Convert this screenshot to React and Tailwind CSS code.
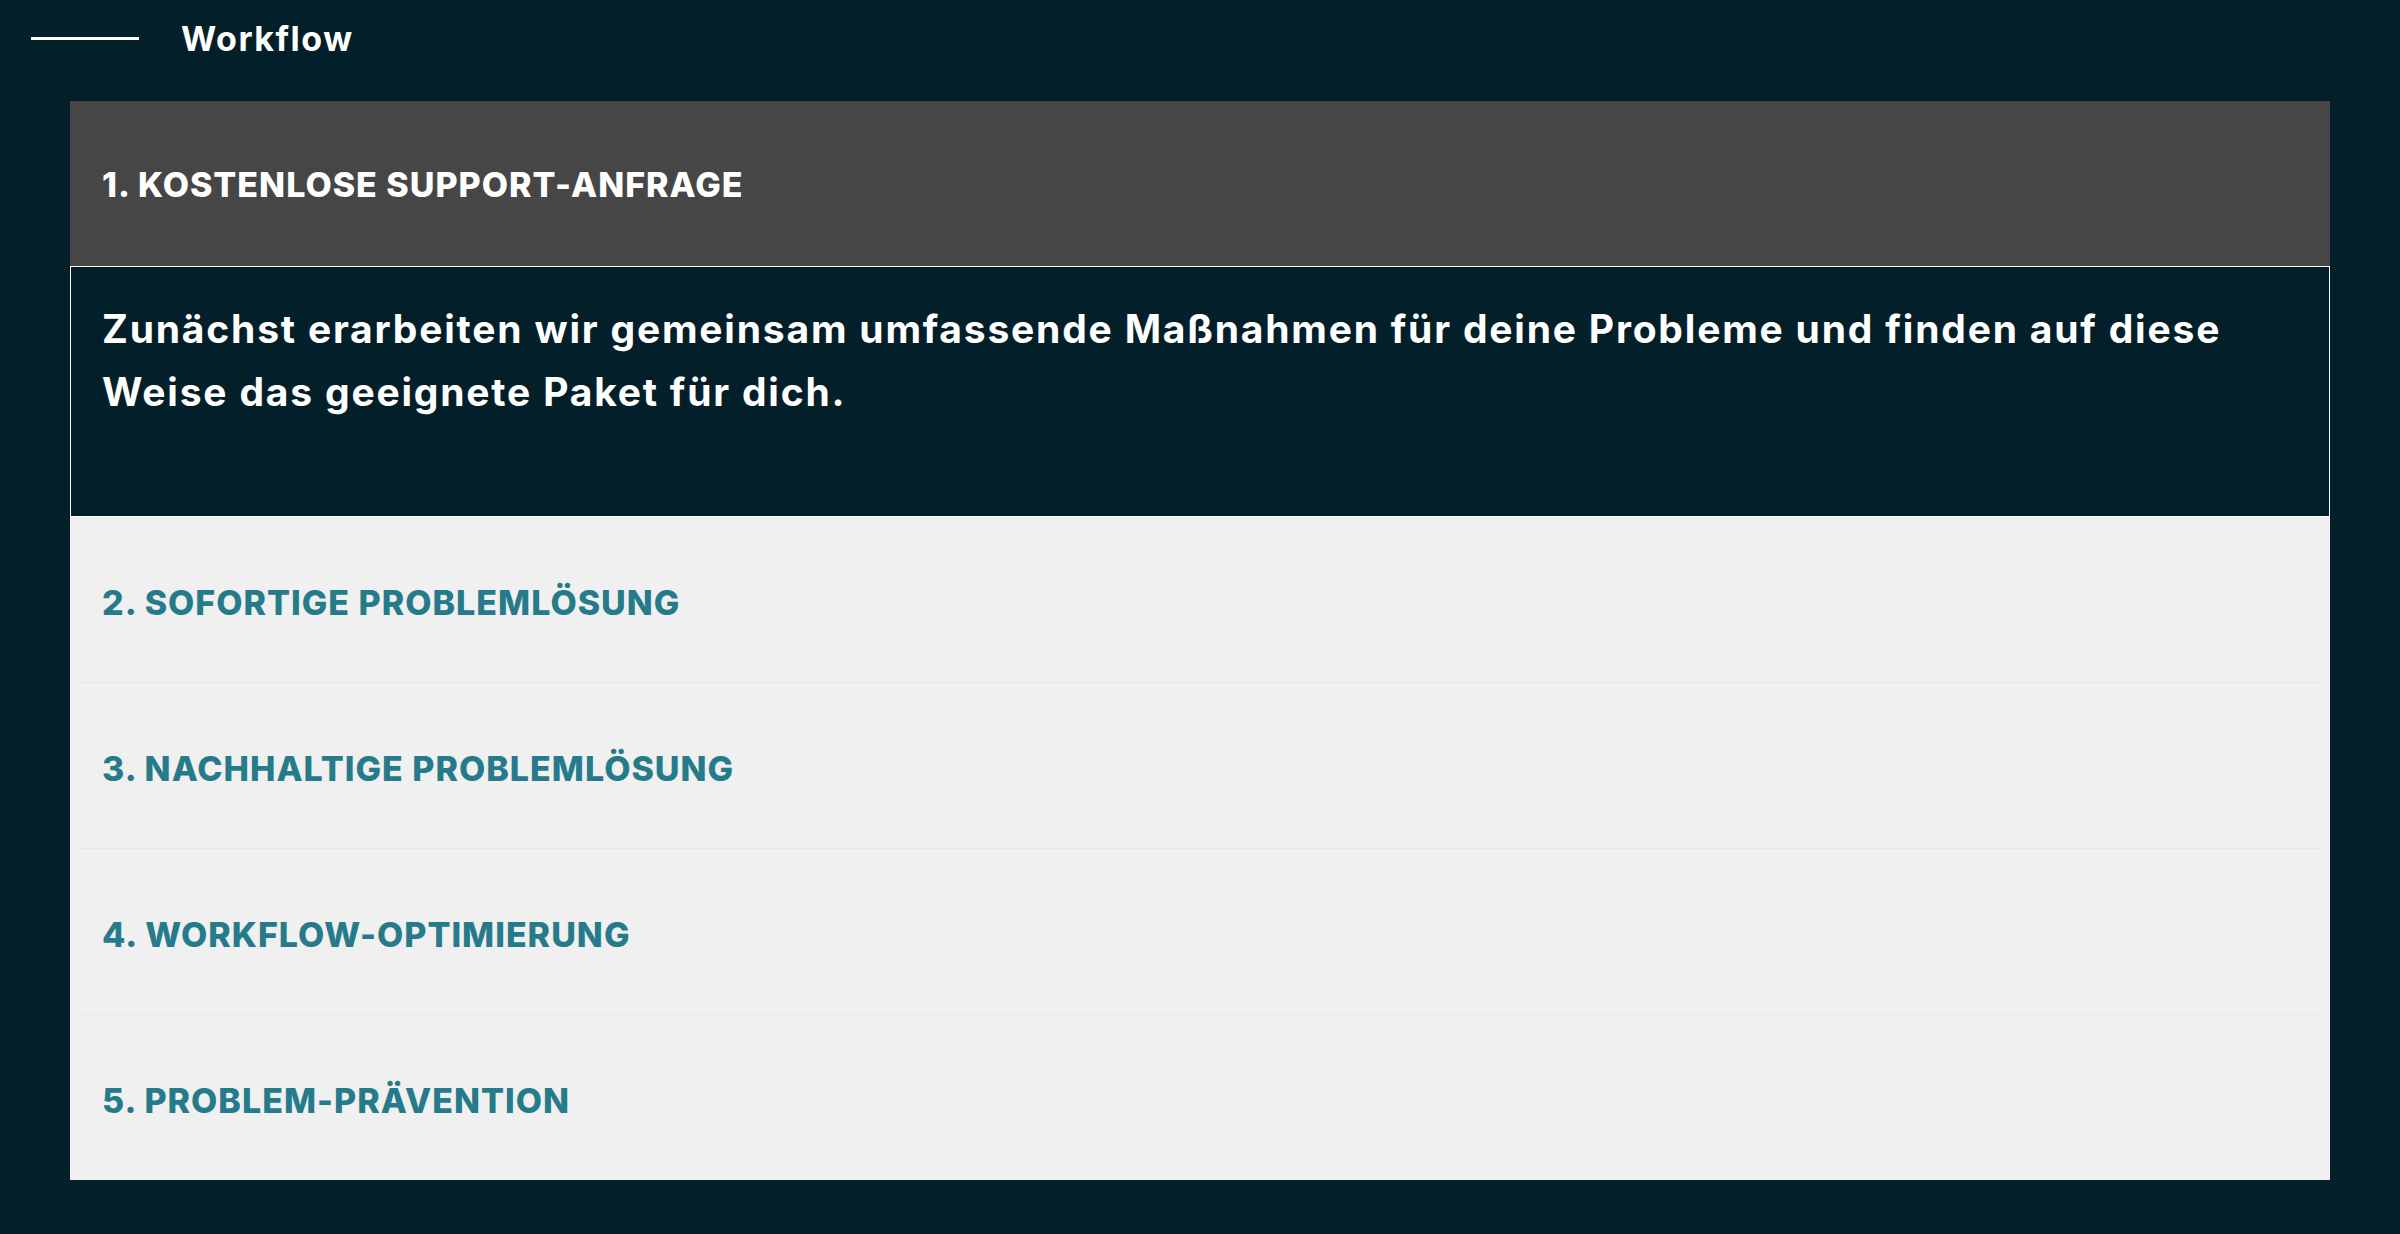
import React, { useState } from "react";

const steps = [
  {
    title: "1. KOSTENLOSE SUPPORT-ANFRAGE",
    text: "Zunächst erarbeiten wir gemeinsam umfassende Maßnahmen für deine Probleme und finden auf diese Weise das geeignete Paket für dich.",
  },
  { title: "2. SOFORTIGE PROBLEMLÖSUNG", text: "" },
  { title: "3. NACHHALTIGE PROBLEMLÖSUNG", text: "" },
  { title: "4. WORKFLOW-OPTIMIERUNG", text: "" },
  { title: "5. PROBLEM-PRÄVENTION", text: "" },
];

const App = () => {
  const [open, setOpen] = useState(0);

  return (
    <div
      className="min-h-screen bg-[#03202a] pb-[52px]"
      style={{ fontFamily: "Inter, 'Noto Sans', sans-serif" }}
    >
      <div className="flex items-center h-[76px] pl-[31px]">
        <span className="block w-[108px] h-[3px] bg-white"></span>
        <h2 className="ml-[42px] text-[34px] font-bold text-white tracking-[1.5px]">Workflow</h2>
      </div>

      <div className="mx-[70px] mt-[25px] bg-[#f0f0f0]">
        {steps.map((step, index) => {
          const isOpen = open === index;
          const last = index === steps.length - 1;
          return (
            <div key={index}>
              <button
                onClick={() => setOpen(isOpen ? -1 : index)}
                className={
                  isOpen
                    ? "w-full flex items-center h-[165px] pl-[32px] pt-[2px] bg-[#464646] text-white text-left"
                    : "w-full flex items-center h-[165px] pl-[32px] pt-[6px] text-[#267b8b] text-left"
                }
              >
                <span className="text-[34px] font-extrabold tracking-[1px]">{step.title}</span>
              </button>
              {isOpen && (
                <div className="border border-white bg-[#03202a] h-[251px] pl-[31px] pr-[40px] pt-[30px]">
                  <p className="text-[39px] leading-[63px] font-bold tracking-[1.8px] text-white">{step.text}</p>
                </div>
              )}
              {!isOpen && !last && (
                <div className="mx-[9px] h-px bg-[#e6e6e6]"></div>
              )}
            </div>
          );
        })}
      </div>
    </div>
  );
};

export default App;
